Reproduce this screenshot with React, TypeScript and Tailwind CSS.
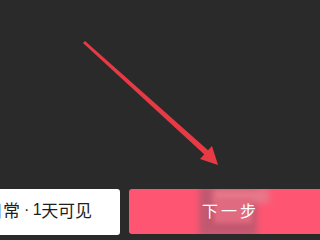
export default function App() {
  return (
    <div
      className="relative w-[320px] h-[240px] overflow-hidden bg-[#2a2a2a]"
      style={{ fontFamily: '"Noto Sans CJK SC", "Liberation Sans", sans-serif' }}
    >
      {/* annotation arrow */}
      <svg className="absolute left-0 top-0" width="320" height="240" viewBox="0 0 320 240">
        <polygon points="83,43 85,41 210,152 206,156" fill="#e83a45" />
        <polygon points="218,165 200,159 212,146" fill="#e83a45" />
      </svg>

      <div className="absolute left-0 right-0 top-[189px] flex gap-[9px]">
        <div className="w-[120px] h-[46px] bg-white rounded-r-[3px] flex items-center overflow-hidden">
          <span className="-ml-[14px] -mt-[4px] whitespace-nowrap text-[17px] text-[#1e1e1e] flex items-center">
            <span>日常</span>
            <span className="font-['Liberation_Sans'] text-[16px] tracking-[-0.5px]">&nbsp;·&nbsp;1</span>
            <span>天可见</span>
          </span>
        </div>
        <div className="relative flex-1 h-[45px] bg-[#fe5672] rounded-l-[3px] flex items-center justify-center overflow-hidden">
          <div className="absolute left-[70px] top-[-3px] w-[58px] h-[50px] bg-[#c25870] blur-[3px]" />
          <div className="absolute left-[84px] top-[0px] w-[56px] h-[14px] bg-[#e7788a] blur-[3px]" />
          <div className="absolute left-[85px] top-[10px] w-[38px] h-[24px] bg-[#e06a80] blur-[2px]" />
          <span className="relative pl-[12px] -mt-[3px] text-[16px] text-white tracking-[3px]">下一步</span>
        </div>
      </div>
    </div>
  );
}
